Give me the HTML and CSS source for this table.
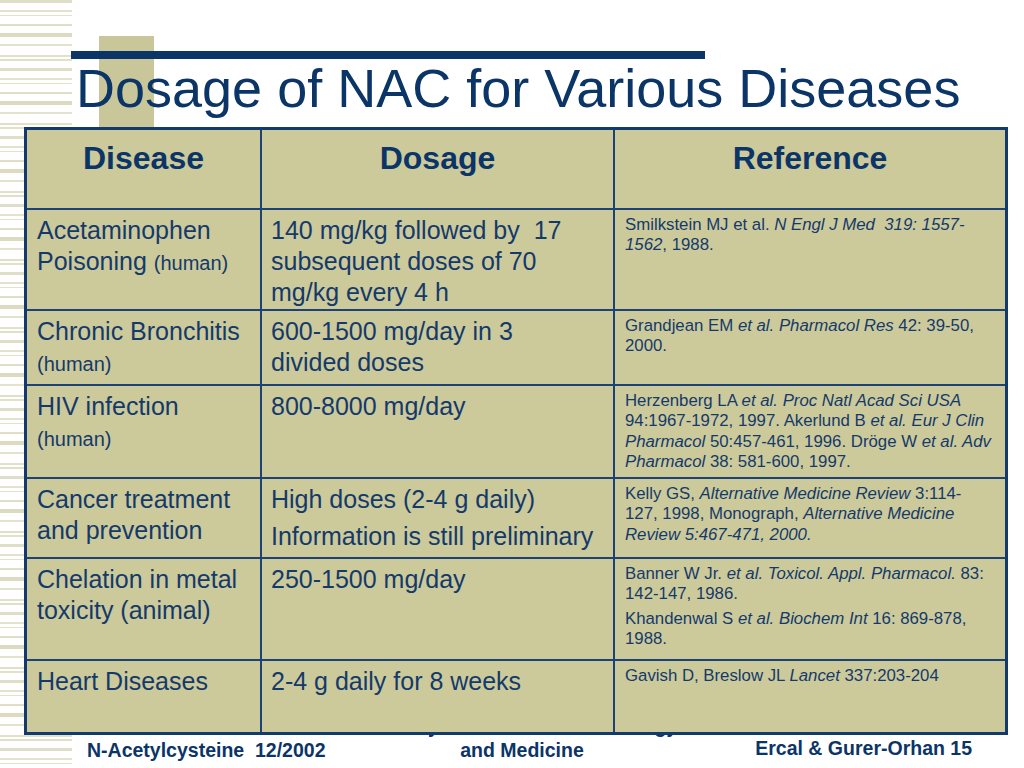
FILE: index.html
```html
<!DOCTYPE html>
<html lang="en">
<head>
<meta charset="utf-8">
<title>Dosage of NAC for Various Diseases</title>
<link rel="stylesheet" href="styles.css">
</head>
<body>
<div class="slide">
  <div class="stripes"></div>
  <div class="accent"></div>
  <div class="rule"></div>

  <h1 class="title">Dosage of NAC for Various Diseases</h1>

  <div class="table">
    <div class="cell head">Disease</div>
    <div class="cell head">Dosage</div>
    <div class="cell head last">Reference</div>

    <div class="cell body">Acetaminophen<br>Poisoning <span class="small">(human)</span></div>
    <div class="cell body">140 mg/kg followed by&nbsp; 17<br>subsequent doses of 70<br>mg/kg every 4 h</div>
    <div class="cell ref last">Smilkstein MJ et al. <i>N Engl J Med&nbsp; 319: 1557-<br>1562</i>, 1988.</div>

    <div class="cell body">Chronic Bronchitis<br><span class="small">(human)</span></div>
    <div class="cell body">600-1500 mg/day in 3<br>divided doses</div>
    <div class="cell ref last">Grandjean EM <i>et al. Pharmacol Res</i> 42: 39-50,<br>2000.</div>

    <div class="cell body">HIV infection<br><span class="small">(human)</span></div>
    <div class="cell body">800-8000 mg/day</div>
    <div class="cell ref last">Herzenberg LA <i>et al. Proc Natl Acad Sci USA</i><br>94:1967-1972, 1997. Akerlund B <i>et al. Eur J Clin<br>Pharmacol</i> 50:457-461, 1996. Dröge W <i>et al. Adv<br>Pharmacol</i> 38: 581-600, 1997.</div>

    <div class="cell body">Cancer treatment<br>and prevention</div>
    <div class="cell body"><p class="para">High doses (2-4 g daily)</p><p class="para">Information is still preliminary</p></div>
    <div class="cell ref last">Kelly GS, <i>Alternative Medicine Review</i> 3:114-<br>127, 1998, Monograph, <i>Alternative Medicine<br>Review 5:467-471, 2000.</i></div>

    <div class="cell body">Chelation in metal<br>toxicity (animal)</div>
    <div class="cell body">250-1500 mg/day</div>
    <div class="cell ref last"><p class="rpara">Banner W Jr. <i>et al. Toxicol. Appl. Pharmacol.</i> 83:<br>142-147, 1986.</p><p class="rpara">Khandenwal S <i>et al. Biochem Int</i> 16: 869-878,<br>1988.</p></div>

    <div class="cell body bottom">Heart Diseases</div>
    <div class="cell body bottom">2-4 g daily for 8 weeks</div>
    <div class="cell ref last bottom">Gavish D, Breslow JL <i>Lancet</i> 337:203-204</div>
  </div>

  <footer class="footer">
    <div class="foot-left">N-Acetylcysteine&nbsp; 12/2002</div>
    <div class="foot-center">Toxicity and Free Radical Biology<br>and Medicine</div>
    <div class="foot-right">Ercal &amp; Gurer-Orhan 15</div>
  </footer>
</div>
</body>
</html>
```

FILE: styles.css
```css
html, body {
  margin: 0;
  padding: 0;
  background: #ffffff;
}

body {
  font-family: "Liberation Sans", Arial, Helvetica, sans-serif;
  color: #0c3466;
}

.slide {
  position: relative;
  width: 1024px;
  height: 768px;
  overflow: hidden;
  padding-top: 61px;
  box-sizing: border-box;
  background: #ffffff;
}

/* decorative background art */
.stripes {
  position: absolute;
  left: 0;
  top: 0;
  width: 72px;
  height: 768px;
  background: repeating-linear-gradient(
    to bottom,
    #dfdec6 0px, #dfdec6 3px,
    #ffffff 3px, #ffffff 10px,
    #e3e2cc 10px, #e3e2cc 12px,
    #ffffff 12px, #ffffff 15px,
    #e3e2cc 15px, #e3e2cc 16px,
    #ffffff 16px, #ffffff 24px,
    #dfdec6 24px, #dfdec6 26px,
    #ffffff 26px, #ffffff 33px,
    #dcdbc2 33px, #dcdbc2 37px,
    #ffffff 37px, #ffffff 44px,
    #e3e2cc 44px, #e3e2cc 46px,
    #ffffff 46px, #ffffff 55px,
    #e1e0c8 55px, #e1e0c8 57px,
    #ffffff 57px, #ffffff 59px,
    #e1e0c8 59px, #e1e0c8 61px,
    #ffffff 61px, #ffffff 68px
  );
}

.accent {
  position: absolute;
  left: 99px;
  top: 36px;
  width: 55px;
  height: 100px;
  background: #c9c69a;
}

.rule {
  position: absolute;
  left: 71px;
  top: 51px;
  width: 634px;
  height: 8px;
  background: #0b3567;
}

.title {
  position: relative;
  z-index: 1;
  margin: 0 0 12px 76px;
  font-size: 54px;
  line-height: 54px;
  font-weight: normal;
  color: #0b3567;
  white-space: nowrap;
}

/* table */
.table {
  position: relative;
  z-index: 2;
  margin-left: 24px;
  width: 984px;
  box-sizing: border-box;
  border: 3px solid #123a6c;
  background: #ccc99b;
  display: grid;
  grid-template-columns: 235px 353px 390px;
  grid-template-rows: 80px 101px 75px 93px 80px 102px 71px;
}

.cell {
  box-sizing: border-box;
  border-right: 2px solid #1d4376;
  border-bottom: 2px solid #1d4376;
  padding: 5px 10px 0 10px;
}

.cell.last {
  border-right: none;
}

.cell.bottom {
  border-bottom: none;
}

.head {
  text-align: center;
  font-weight: bold;
  font-size: 32px;
  line-height: 37px;
  padding-top: 10px;
  color: #0b3567;
}

.body {
  font-size: 25px;
  line-height: 31px;
  color: #143a6a;
  white-space: nowrap;
}

.body:nth-child(3n+2) {
  padding-left: 9px;
}

.small {
  font-size: 20px;
}

.para {
  margin: 0 0 6px 0;
}

.ref {
  font-size: 16.8px;
  line-height: 20.3px;
  color: #143a6a;
  white-space: nowrap;
}

.rpara {
  margin: 0 0 4.5px 0;
}

/* footer */
.footer {
  position: relative;
  z-index: 1;
  margin-top: -21px;
  padding: 0 52px 0 87px;
  display: grid;
  grid-template-columns: 260px 350px 1fr;
  align-items: end;
  font-size: 19.5px;
  line-height: 24px;
  font-weight: bold;
  color: #0b3567;
}

.foot-left {
  white-space: nowrap;
}

.foot-center {
  text-align: center;
  white-space: nowrap;
}

.foot-right {
  text-align: right;
  white-space: nowrap;
  padding-bottom: 2px;
}
```
